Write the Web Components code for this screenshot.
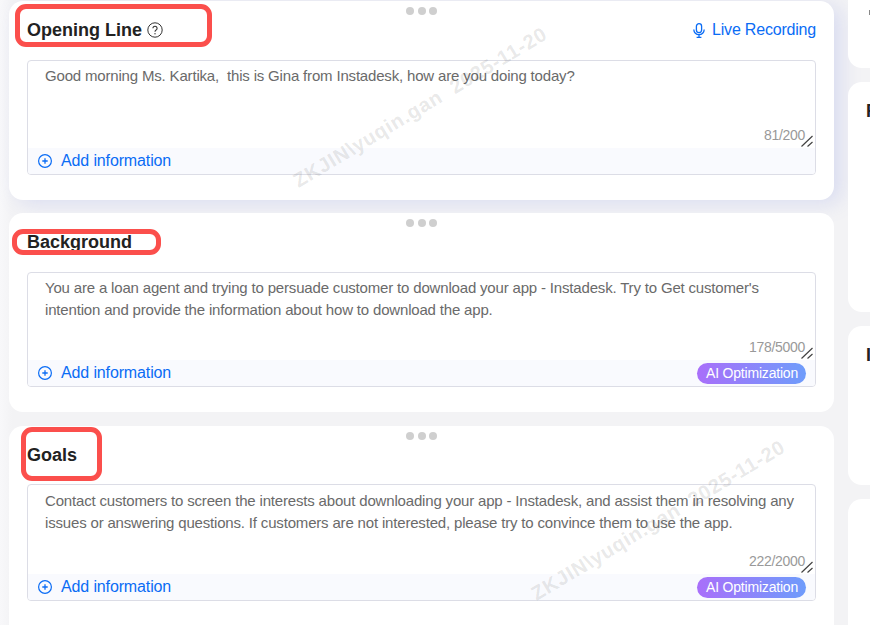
<!DOCTYPE html>
<html><head><meta charset="utf-8">
<style>
html,body{margin:0;padding:0;width:870px;height:625px;overflow:hidden;background:#f3f3f5;font-family:"Liberation Sans",Arial,sans-serif}
</style></head><body>
<app-page>
  <prompt-card heading="Opening Line" count="81/200" help live>Good morning Ms. Kartika,&nbsp; this is Gina from Instadesk, how are you doing today?</prompt-card>
  <prompt-card heading="Background" count="178/5000" ai>You are a loan agent and trying to persuade customer to download your app - Instadesk. Try to Get customer's intention and provide the information about how to download the app.</prompt-card>
  <prompt-card class="third" heading="Goals" count="222/2000" ai>Contact customers to screen the interests about downloading your app - Instadesk, and assist them in resolving any issues or answering questions. If customers are not interested, please try to convince them to use the app.</prompt-card>
  <side-card slot="side" h="68"><span class="tick"></span></side-card>
  <side-card slot="side" h="230" letter="F"></side-card>
  <side-card slot="side" h="159" letter="I"></side-card>
  <side-card slot="side" h="200"></side-card>
  <mark-box slot="over" style="left:15px;top:4px;width:197px;height:43px"></mark-box>
  <mark-box slot="over" style="left:12px;top:229px;width:149px;height:26px"></mark-box>
  <mark-box slot="over" style="left:21px;top:427px;width:81px;height:54px"></mark-box>
  <water-mark slot="over" style="left:270px;top:95px"></water-mark>
  <water-mark slot="over" style="left:508px;top:508px"></water-mark>
</app-page>
<script>
const tpl=(html)=>{const t=document.createElement('template');t.innerHTML=html;return t};

const pageT=tpl(`<style>
:host{display:flex;position:relative;width:870px;height:625px;overflow:hidden;box-sizing:border-box;padding:1px 0 0 9px;gap:14px;background:linear-gradient(90deg,#f8f8fa 0,#f3f3f5 12px)}
.main{flex:0 0 825px;display:flex;flex-direction:column;gap:13px}
.side{flex:0 0 300px;display:flex;flex-direction:column;gap:14px;margin-top:-1px}
</style><div class="main"><slot></slot></div><div class="side"><slot name="side"></slot></div><slot name="over"></slot>`);
customElements.define('app-page',class extends HTMLElement{constructor(){super();this.attachShadow({mode:'open'}).appendChild(pageT.content.cloneNode(true))}});

const addT=tpl(`<style>
:host{display:inline-flex;align-items:center;gap:9px;color:#0a6cf5;font-size:16px;letter-spacing:-.13px;line-height:26px}
svg{display:block;width:14px;height:14px}
</style><svg viewBox="0 0 14 14" fill="none" stroke="#0a6cf5"><circle cx="7" cy="7" r="6.4" stroke-width="1.2"/><path d="M7 4.3v5.4M4.3 7h5.4" stroke-width="1.3"/></svg><span>Add information</span>`);
customElements.define('add-info',class extends HTMLElement{constructor(){super();this.attachShadow({mode:'open'}).appendChild(addT.content.cloneNode(true))}});

const aiT=tpl(`<style>
:host{display:inline-block;height:21px;line-height:20px;padding:0 8px 0 9px;border-radius:11px;color:#fff;font-size:14px;letter-spacing:-.2px;background:linear-gradient(90deg,#a96ffa,#6e9cfb);white-space:nowrap}
</style><slot></slot>`);
customElements.define('ai-button',class extends HTMLElement{constructor(){super();this.attachShadow({mode:'open'}).appendChild(aiT.content.cloneNode(true))}});

const cardT=tpl(`<style>
:host{display:block;box-sizing:border-box;height:199px;background:#fff;border-radius:14px;padding:0 18px;flex:none}
:host([live]){box-shadow:8px 4px 20px rgba(120,135,225,.2)}
:host(.third){height:240px;margin-top:1px}
.dots{display:flex;justify-content:center;gap:3.5px;padding-top:6px;height:8px}
.dots i{width:8px;height:8px;border-radius:50%;background:#cfcfcf}
.head{display:flex;align-items:center;justify-content:space-between;height:22px;margin-top:4px;margin-bottom:19px}
:host(.third) .head{margin-bottom:18px}
.title{display:flex;align-items:center;gap:5px;font-weight:700;font-size:18px;color:#222;white-space:nowrap}
.live{display:none;align-items:center;gap:7px;color:#0a6cf5;font-size:16px;letter-spacing:-.2px}
:host([live]) .live{display:flex}
.help{display:none;width:16px;height:16px}
:host([help]) .help{display:block}
.box{border:1px solid #dcdde6;border-radius:4px;height:113px;display:flex;flex-direction:column;overflow:hidden}
:host(.third) .box{height:115px}
.area{flex:1;position:relative;display:flex;flex-direction:column;justify-content:space-between;padding:4px 10px 0 17px}
:host(.third) .area{padding-top:5px}
.text{font-size:15px;letter-spacing:-.175px;line-height:22px;color:#6a6a6a}
.count{text-align:right;font-size:14px;letter-spacing:-.3px;line-height:16px;color:#999;padding-bottom:5px}
.grip{position:absolute;right:2px;bottom:1px;width:12px;height:12px}
.foot{flex:none;height:26px;background:#f9fafe;display:flex;align-items:center;justify-content:space-between;padding:0 9px 0 10px}
</style>
<div class="dots"><i></i><i></i><i></i></div>
<div class="head">
 <div class="title"><span id="h"></span>
  <svg class="help" viewBox="0 0 16 16" fill="none" stroke="#333"><circle cx="8" cy="8" r="7.2" stroke-width="1"/><path d="M5.9 6.3a2.1 2.1 0 1 1 3.2 1.8c-.7.4-1.1.8-1.1 1.6" stroke-width="1.1"/><circle cx="8" cy="11.7" r=".7" fill="#333" stroke="none"/></svg></div>
 <div class="live"><svg width="12" height="15" viewBox="0 0 12 15" fill="none" stroke="#0a6cf5" stroke-width="1.3"><rect x="3.4" y=".7" width="5.2" height="9" rx="2.6"/><path d="M.8 6.5a5.2 5.2 0 0 0 10.4 0M6 11.8v2.6M3.6 14.4h4.8"/></svg><span>Live Recording</span></div>
</div>
<div class="box">
 <div class="area"><div class="text"><slot></slot></div><div class="count" id="c"></div>
  <svg class="grip" viewBox="0 0 12 12" stroke="#444" stroke-width="1.2" fill="none"><path d="M.5 11.5 11.5 1M6.5 11.5l5-4.5"/></svg></div>
 <div class="foot"><add-info></add-info><ai-button id="ai">AI Optimization</ai-button></div>
</div>`);
customElements.define('prompt-card',class extends HTMLElement{
 constructor(){super();const s=this.attachShadow({mode:'open'});s.appendChild(cardT.content.cloneNode(true));
  s.getElementById('h').textContent=this.getAttribute('heading')||'';
  s.getElementById('c').textContent=this.getAttribute('count')||'';
  if(!this.hasAttribute('ai'))s.getElementById('ai').remove();}
});

customElements.define('side-card',class extends HTMLElement{
 constructor(){super();const s=this.attachShadow({mode:'open'});
  const l=this.getAttribute('letter')||'';
  s.innerHTML=`<style>:host{display:block;flex:none;box-sizing:border-box;background:#fff;border-radius:14px;padding:18px 0 0 18px;font-weight:700;font-size:18px;line-height:22px;color:#222;position:relative}
  .tick{display:block;width:2px;height:5px;background:#888;margin:-8px 0 0 3px}</style>${l?`<span>${l}</span>`:(this.firstElementChild?'<i class="tick"></i>':'')}`;
  this.style.height=this.getAttribute('h')+'px';
  if(this.firstElementChild){this.style.borderRadius='0 0 0 14px'}}
});

customElements.define('mark-box',class extends HTMLElement{
 constructor(){super();this.attachShadow({mode:'open'}).innerHTML=`<style>:host{display:block;position:absolute;box-sizing:border-box;border:5px solid #fb4f4c;border-radius:11px;pointer-events:none}</style>`}
});
customElements.define('water-mark',class extends HTMLElement{
 constructor(){super();this.attachShadow({mode:'open'}).innerHTML=`<style>:host{display:block;position:absolute;width:300px;text-align:center;font-size:20px;font-weight:700;line-height:24px;font-family:"Liberation Sans",Arial,sans-serif;white-space:pre;color:rgba(90,90,90,.15);transform:rotate(-31deg);pointer-events:none;letter-spacing:.8px}</style><span>ZKJIN\\yuqin.gan&nbsp; 2025-11-20</span>`}
});
</script>
</body></html>
